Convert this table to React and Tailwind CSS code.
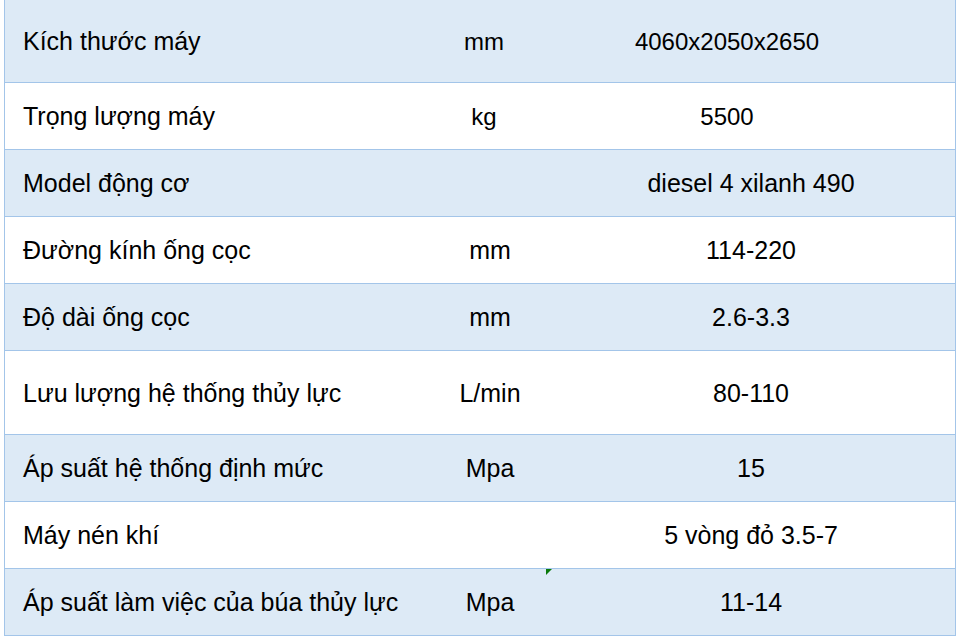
const rows = [
  { name: "Kích thước máy", unit: "mm", value: "4060x2050x2650", h: "h-[83px]", shift: true },
  { name: "Trọng lượng máy", unit: "kg", value: "5500", h: "h-[67px]", shift: true },
  { name: "Model động cơ", unit: "", value: "diesel 4 xilanh 490", h: "h-[67px]" },
  { name: "Đường kính ống cọc", unit: "mm", value: "114-220", h: "h-[67px]" },
  { name: "Độ dài ống cọc", unit: "mm", value: "2.6-3.3", h: "h-[67px]" },
  { name: "Lưu lượng hệ thống thủy lực", unit: "L/min", value: "80-110", h: "h-[84px]" },
  { name: "Áp suất hệ thống định mức", unit: "Mpa", value: "15", h: "h-[67px]" },
  { name: "Máy nén khí", unit: "", value: "5 vòng đỏ 3.5-7", h: "h-[67px]" },
  { name: "Áp suất làm việc của búa thủy lực", unit: "Mpa", value: "11-14", h: "h-[67px]", mark: true },
];

export default function App() {
  return (
    <div className="w-[959px] h-[637px] bg-white overflow-hidden">
      <div
        className="ml-[4px] w-[952px] border-x border-[#a3c5e9] text-[25px] text-black"
        style={{ fontFamily: "'Liberation Sans', Arial, sans-serif" }}
      >
        {rows.map((r, i) => (
          <div
            key={i}
            className={`relative flex items-center border-b border-[#a3c5e9] ${r.h} ${
              i % 2 === 0 ? "bg-[#ddeaf6]" : "bg-white"
            }`}
          >
            <div className="w-[428px] pl-[18px] pt-[2px]">{r.name}</div>
            <div className={`w-[114px] text-center pt-[2px] ${r.shift ? "pr-[12px] text-[24px]" : ""}`}>{r.unit}</div>
            <div className={`flex-1 text-center pt-[2px] ${r.shift ? "pr-[48px] text-[24px]" : ""}`}>{r.value}</div>
            {r.mark && (
              <svg className="absolute left-[541px] top-0" width="6" height="6" viewBox="0 0 6 6">
                <polygon points="0,0 6,0 0,6" fill="#0a7a0a" />
              </svg>
            )}
          </div>
        ))}
      </div>
    </div>
  );
}
